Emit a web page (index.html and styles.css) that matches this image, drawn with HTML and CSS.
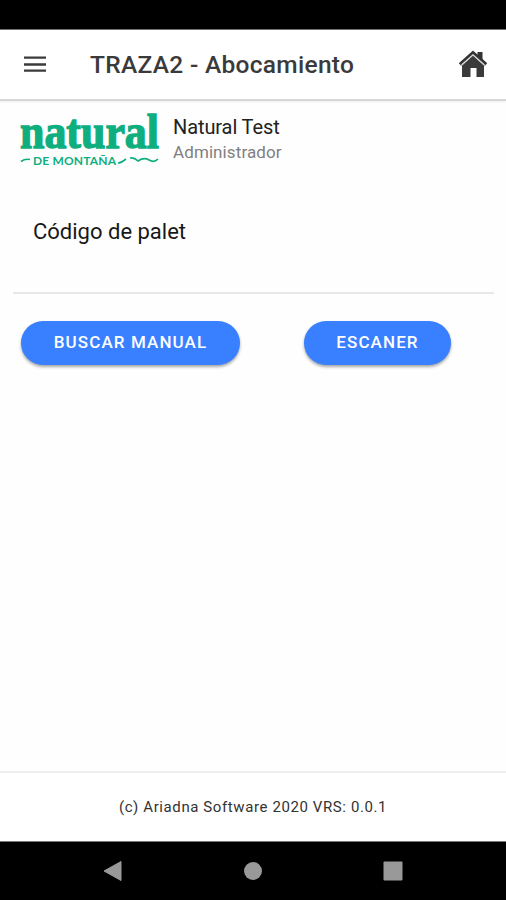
FILE: index.html
```
<!DOCTYPE html>
<html lang="es">
<head>
    <meta charset="UTF-8">
    <meta name="viewport" content="width=device-width, initial-scale=1.0">
    <title>TRAZA2 - Abocamiento</title>
    <link rel="stylesheet" href="styles.css">
</head>
<body>
    <div class="status-bar"></div>
    <header class="toolbar">
        <svg class="menu-icon" width="22" height="18" viewBox="0 0 22 18">
            <path d="M0 2.700h22M0 9.500h22M0 15.700h22" stroke="#3b3b3b" stroke-width="2.300"/>
        </svg>
        <h1 class="title">TRAZA2 - Abocamiento</h1>
        <svg class="home-icon" width="28" height="28" viewBox="0 0 28 28">
            <path d="M18.500 2h5v9l-5-4z" fill="#333"/>
            <path d="M3 15.500L14 5.500l11 10V27h-7.500v-9h-6v9H3z" fill="#3a3a3a"/>
            <path d="M1 14.500L14 2.800l13 11.700" fill="none" stroke="#333" stroke-width="3.600"/>
            <path d="M2.500 15L14 4.800l11.500 10.200" fill="none" stroke="#ddd" stroke-width="1.200"/>
        </svg>
    </header>
    <main class="content">
        <div class="user">
            <svg class="logo" width="142" height="56" viewBox="0 0 142 56">
                <text class="logo-name" x="1" y="35" textLength="139" lengthAdjust="spacingAndGlyphs">natural</text>
                <text class="logo-sub" x="14" y="51.500" textLength="83">DE MONTAÑA</text>
                <path class="logo-wave" d="M2 48.500q4-3 9-2M99 50q3 0 8-4M111 45q4-1 8 3q6-4 11-1q5 3 9-1"/>
            </svg>
            <div class="user-text">
                <div class="user-name">Natural Test</div>
                <div class="user-role">Administrador</div>
            </div>
        </div>
        <div class="field">
            <label class="field-label">Código de palet</label>
        </div>
        <div class="actions">
            <button class="button search">BUSCAR MANUAL</button>
            <button class="button scan">ESCANER</button>
        </div>
    </main>
    <footer class="footer">(c) Ariadna Software 2020 VRS: 0.0.1</footer>
    <nav class="nav-bar">
        <svg width="20" height="22" viewBox="0 0 20 22"><path d="M1 11L18 1.500v19z" fill="#999" stroke="#999"/></svg>
        <svg width="20" height="22" viewBox="0 0 20 22"><circle cx="10" cy="11" r="9" fill="#999"/></svg>
        <svg width="20" height="22" viewBox="0 0 20 22"><rect x="0.500" y="1.500" width="19" height="19" rx="1" fill="#999"/></svg>
    </nav>
</body>
</html>
```
FILE: styles.css
```
* {
    box-sizing: border-box;
}
body {
    display: flex;
    flex-direction: column;
    height: 900px;
    margin: 0;
    font-family: Roboto, sans-serif;
    background-color: #fefefe;
}
.status-bar {
    height: 30px;
    background-color: #000;
    border-bottom: 1px solid #666;
}
.toolbar {
    display: flex;
    align-items: center;
    height: 71px;
    padding: 0 19px 1px 24px;
    background-color: #fff;
    border-bottom: 2px solid #d6d6d6;
    box-shadow: 0 1px 2px #eee;
}
.title {
    flex: 1;
    margin: 0 0 0 44px;
    font-size: 24.5px;
    font-weight: 500;
    letter-spacing: 0.3px;
    color: #3a3a3a;
}
.content {
    flex: 1;
    padding: 12px 12px 0 13px;
}
.user {
    display: flex;
    padding-left: 6px;
}
.logo {
    overflow: visible;
}
.logo-name {
    font: bold 49px "Liberation Serif", serif;
    fill: #0fae7e;
    stroke: #0fae7e;
    stroke-width: 1.4px;
}
.logo-sub {
    font: bold 12px Lato, sans-serif;
    fill: #0fae7e;
}
.logo-wave {
    fill: none;
    stroke: #0fae7e;
    stroke-width: 1.7px;
}
.user-text {
    margin-left: 12px;
}
.user-name {
    margin-top: 1px;
    font-size: 20px;
    line-height: 26px;
    letter-spacing: -0.1px;
    color: #222;
}
.user-role {
    font-size: 17px;
    line-height: 24px;
    letter-spacing: 0.1px;
    color: #808080;
}
.field {
    height: 125px;
    padding: 49px 20px 0;
    border-bottom: 2px solid #e8e8e8;
}
.field-label {
    font-size: 22px;
    line-height: 28px;
    color: #181818;
}
.actions {
    display: flex;
    padding: 27px 0 0 8px;
}
.button {
    height: 44px;
    padding: 0 0 2px;
    border: 0;
    border-radius: 22px;
    background-color: #3880ff;
    box-shadow: 0 2px 3px rgba(0, 0, 0, 0.35);
    color: #fff;
    font-family: Roboto, sans-serif;
    font-size: 17px;
    font-weight: 500;
    letter-spacing: 1.1px;
}
.search {
    width: 219px;
}
.scan {
    width: 147px;
    margin-left: 64px;
}
.footer {
    height: 70px;
    padding-top: 25px;
    border-top: 2px solid #eee;
    background-color: #fff;
    font-size: 15px;
    line-height: 18px;
    letter-spacing: 0.6px;
    text-align: center;
    color: #333;
}
.nav-bar {
    display: flex;
    align-items: center;
    justify-content: center;
    gap: 120px;
    height: 59px;
    border-top: 1px solid #777;
    background-color: #000;
}
```
